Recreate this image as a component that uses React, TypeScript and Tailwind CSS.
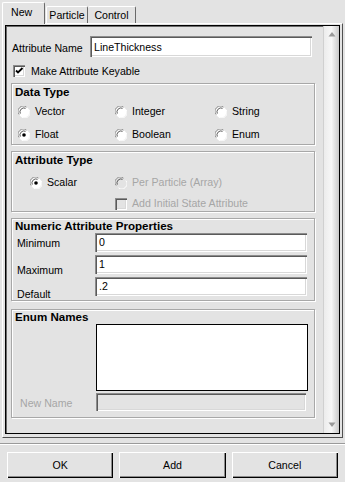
import React from 'react';

const sunken =
  'shadow-[inset_1px_1px_0_#8c8c8c,inset_2px_2px_0_#5a5a5a,inset_-1px_-1px_0_#ffffff,inset_-2px_-2px_0_#d8d8d8]';
const raised =
  'shadow-[inset_1px_1px_0_#ffffff,inset_-1px_-1px_0_#000000,inset_-2px_-2px_0_#8c8c8c]';
const etched = 'border border-[#a8a8a8] shadow-[1px_1px_0_#ffffff,inset_1px_1px_0_#ffffff]';

const Radio: React.FC<{ checked?: boolean; disabled?: boolean }> = ({ checked, disabled }) => (
  <svg width="12" height="12" viewBox="0 0 12 12" className="shrink-0">
    <circle cx="6" cy="6" r="5.5" fill={disabled ? '#e3e3e3' : '#ffffff'} />
    <path d="M1.2 8.5 A5.2 5.2 0 0 1 8.5 1.2" fill="none" stroke="#8c8c8c" strokeWidth="1" />
    <path d="M2.3 7.6 A4 4 0 0 1 7.6 2.3" fill="none" stroke="#5a5a5a" strokeWidth="1" />
    <path d="M10.8 3.5 A5.2 5.2 0 0 1 3.5 10.8" fill="none" stroke="#ffffff" strokeWidth="1" />
    {checked && <circle cx="6" cy="6" r="1.8" fill="#000000" />}
  </svg>
);

const Check: React.FC<{ checked?: boolean; disabled?: boolean }> = ({ checked, disabled }) => (
  <div className={`w-[12px] h-[12px] shrink-0 ${disabled ? 'bg-[#e3e3e3]' : 'bg-white'} ${sunken} relative`}>
    {checked && (
      <svg width="12" height="12" viewBox="0 0 12 12" className="absolute left-0 top-0">
        <path d="M3 5.5 L5 7.5 L9.5 3" fill="none" stroke="#000" strokeWidth="1.8" />
      </svg>
    )}
  </div>
);

const Field: React.FC<{ value?: string; className?: string; disabled?: boolean }> = ({ value, className, disabled }) => (
  <div className={`${disabled ? 'bg-[#e3e3e3]' : 'bg-white'} ${sunken} flex items-center pl-[4px] pt-px text-black ${className || ''}`}>
    {value}
  </div>
);

const Arrow: React.FC<{ up?: boolean }> = ({ up }) => (
  <div className="w-[15px] h-[16px] flex items-center justify-center">
    <svg width="8" height="6" viewBox="0 0 8 6">
      <path d={up ? 'M0.5 5.5 L4 1 L7.5 5.5 Z' : 'M0.5 0.5 L4 5 L7.5 0.5 Z'} fill="#9a9a9a" />
    </svg>
  </div>
);

const Label: React.FC<{ text: string; disabled?: boolean }> = ({ text, disabled }) => (
  <span className={disabled ? 'text-[#a6a6a6]' : 'text-black'}>{text}</span>
);

const title = 'font-bold text-[11.6px] pl-[3px]';

export default function App() {
  return (
    <div className="w-[345px] h-[482px] bg-[#e3e3e3] font-['Liberation_Sans',Arial,sans-serif] text-[10.6px] text-black leading-none overflow-hidden select-none">
      {/* tabs */}
      <div className="flex items-end h-[23px] pl-[2px]">
        <div className="relative z-10 -mb-px h-[22px] w-[43px] bg-[#e3e3e3] border-l border-t border-white border-r border-r-[#6a6a6a] rounded-t-[2px] flex items-center pl-[8px] pb-[2px]">
          New
        </div>
        <div className="h-[17px] w-[42px] ml-[1px] border-l border-t border-white border-r border-r-[#6a6a6a] rounded-t-[2px] flex items-center justify-center">
          Particle
        </div>
        <div className="h-[17px] w-[48px] border-t border-white border-r border-r-[#6a6a6a] rounded-t-[2px] flex items-center justify-center">
          Control
        </div>
      </div>

      {/* tab panel */}
      <div className="mx-[2px] h-[415px] border-t border-l border-white border-r border-b border-r-[#505050] border-b-[#505050] px-[2px] pt-px pb-[3px] flex">
        <div className="flex-1 flex border border-black shadow-[inset_1px_1px_0_#6a6a6a]">
          <div className="flex-1 flex flex-col pl-[5px] pr-[2px] pt-[2px]">
            <div className="flex items-center h-[21px] mt-[8px]">
              <span className="w-[79px] pl-px pt-[4px]">Attribute Name</span>
              <Field value="LineThickness" className="w-[222px] h-[21px]" />
            </div>
            <div className="flex items-center gap-[6px] mt-[8px] pl-[2px] h-[12px]">
              <Check checked />
              <span>Make Attribute Keyable</span>
            </div>

            {/* Data Type */}
            <div className={`${etched} w-[304px] h-[62px] mt-[6px]`}>
              <div className={`${title} pt-[2px]`}>Data Type</div>
              <div className="grid grid-cols-[97px_100px_1fr] gap-y-[11px] pl-[6px] mt-[8px]">
                {[
                  ['Vector', false],
                  ['Integer', false],
                  ['String', false],
                  ['Float', true],
                  ['Boolean', false],
                  ['Enum', false],
                ].map(([t, c]) => (
                  <div key={t as string} className="flex items-center gap-[5px] h-[12px]">
                    <Radio checked={c as boolean} />
                    <span>{t as string}</span>
                  </div>
                ))}
              </div>
            </div>

            {/* Attribute Type */}
            <div className={`${etched} w-[304px] h-[61px] mt-[6px]`}>
              <div className={`${title} pt-[2px]`}>Attribute Type</div>
              <div className="flex mt-[11px] h-[12px]">
                <div className="w-[103px] pl-[18px] flex items-center gap-[5px]">
                  <Radio checked />
                  <span>Scalar</span>
                </div>
                <div className="flex items-center gap-[5px]">
                  <Radio disabled />
                  <Label text="Per Particle (Array)" disabled />
                </div>
              </div>
              <div className="flex items-center gap-[5px] mt-[9px] pl-[103px] h-[12px]">
                <Check disabled />
                <Label text="Add Initial State Attribute" disabled />
              </div>
            </div>

            {/* Numeric */}
            <div className={`${etched} w-[304px] h-[83px] mt-[6px]`}>
              <div className={`${title} pt-px`}>Numeric Attribute Properties</div>
              <div className="flex flex-col gap-[3px] mt-px">
                {[
                  ['Minimum', '0', 'pt-[5px]'],
                  ['Maximum', '1', 'pt-[10px]'],
                  ['Default', '.2', 'pt-[12px]'],
                ].map(([l, v, p]) => (
                  <div key={l} className="flex items-start h-[19px]">
                    <span className={`w-[83px] pl-[5px] ${p}`}>{l}</span>
                    <Field value={v} className="w-[212px] h-[19px]" />
                  </div>
                ))}
              </div>
            </div>

            {/* Enum Names */}
            <div className={`${etched} w-[304px] h-[109px] mt-[8px]`}>
              <div className={`${title} pt-px`}>Enum Names</div>
              <div className="ml-[84px] mt-px w-[212px] h-[67px] bg-white border border-black" />
              <div className="flex items-center mt-[2px]">
                <span className="w-[84px] pl-[8px] pt-[3px] text-[#a6a6a6]">New Name</span>
                <Field disabled className="w-[210px] h-[18px]" />
              </div>
            </div>
          </div>

          {/* scrollbar */}
          <div className="w-[16px] flex flex-col justify-between bg-gradient-to-r from-[#ececec] via-[#f7f7f7] to-[#c9c9c9] border-l border-[#d0d0d0]">
            <Arrow up />
            <Arrow />
          </div>
        </div>
      </div>

      {/* separator */}
      <div className="mt-[5px] h-[2px] border-t border-[#9a9a9a] border-b border-b-white" />

      {/* buttons */}
      <div className="flex gap-[6px] px-[7px] mt-[7px]">
        {['OK', 'Add', 'Cancel'].map((b) => (
          <div key={b} className={`flex-1 h-[26px] ${raised} flex items-center justify-center pt-px`}>
            {b}
          </div>
        ))}
      </div>
    </div>
  );
}
